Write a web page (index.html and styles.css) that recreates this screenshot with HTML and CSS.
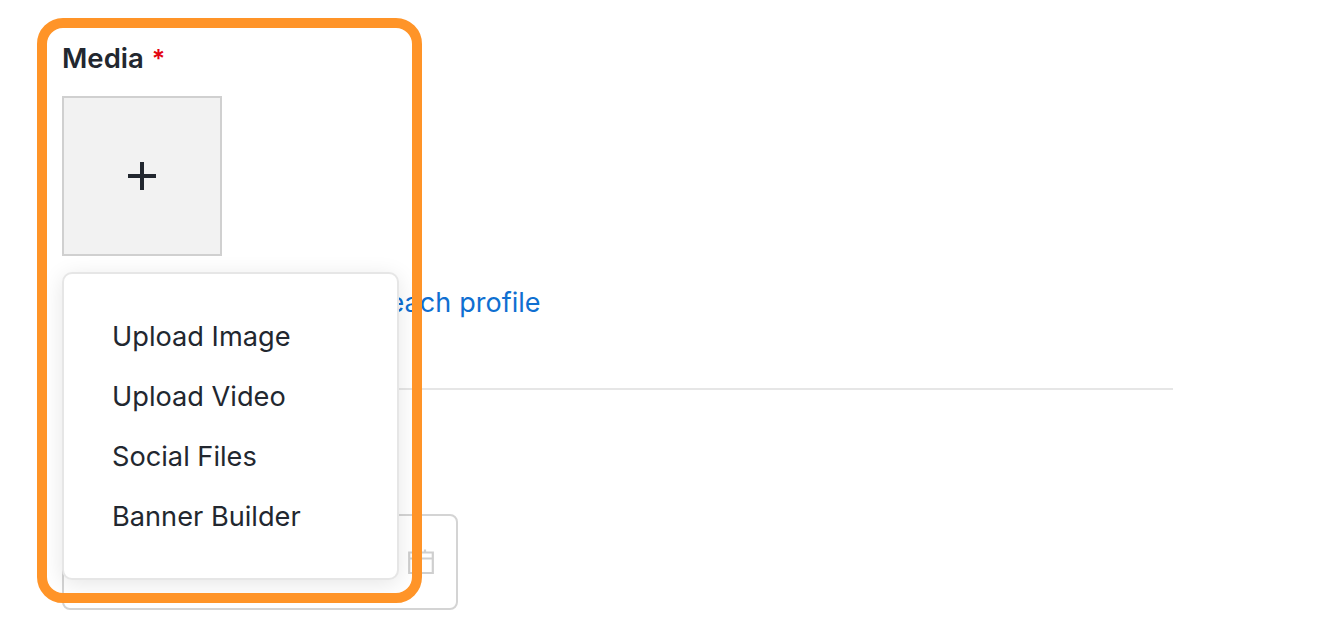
FILE: index.html
```html
<!DOCTYPE html>
<html lang="en">
<head>
  <meta charset="UTF-8">
  <title>Media</title>
  <link rel="stylesheet" href="styles.css">
</head>
<body>

  <div class="form">
    <div class="media-field">
      <label class="field-label">Media <span class="required">*</span></label>
      <button class="add-tile">
        <svg width="30" height="30" viewBox="0 0 30 30"><path d="M15 1V29M1 15H29" stroke="#22272f" stroke-width="4" fill="none"/></svg>
      </button>
      <a class="profile-link" href="#">Use a different media for each profile</a>

      <div class="media-menu">
        <div class="menu-item">Upload Image</div>
        <div class="menu-item">Upload Video</div>
        <div class="menu-item">Social Files</div>
        <div class="menu-item">Banner Builder</div>
      </div>
    </div>

    <hr class="divider">

    <div class="date-input">
      <svg class="calendar" width="26" height="26" viewBox="0 0 26 26"><path d="M1.2 3.5H24.8V24H1.2ZM1.2 9.5H24.8M8 0.5V3.5M17 0.5V3.5" stroke="#cfcfcf" stroke-width="2.2" fill="none"/></svg>
    </div>
  </div>

  <div class="highlight"></div>

</body>
</html>
```

FILE: styles.css
```css
body {
  margin: 0;
  font-family: Inter, "Liberation Sans", sans-serif;
  color: #22272f;
  background-color: #fff;
  overflow: hidden;
}

.form {
  width: 1111px;
  padding: 41px 0 0 62px;
}

.media-field {
  position: relative;
}

.field-label {
  display: block;
  height: 55px;
  font-size: 27.5px;
  line-height: 35px;
  font-weight: 600;
}

.required {
  margin-left: 1px;
  font-size: 25px;
  color: #e30613;
}

.add-tile {
  display: flex;
  align-items: center;
  justify-content: center;
  box-sizing: border-box;
  width: 160px;
  height: 160px;
  padding: 0;
  border: 2px solid #d0d0d0;
  background-color: #f2f2f2;
}

.profile-link {
  display: block;
  margin-top: 30px;
  font-size: 27px;
  line-height: 34px;
  word-spacing: 0.6px;
  color: #0f6fd1;
  text-decoration: none;
}

.media-menu {
  position: absolute;
  left: 0;
  top: 231px;
  box-sizing: border-box;
  width: 337px;
  height: 308px;
  padding: 33px 48px;
  background-color: #fff;
  border: 2px solid #e6e6e6;
  border-radius: 10px;
  box-shadow: 0 4px 22px rgba(0, 0, 0, 0.1);
}

.menu-item {
  font-size: 27.2px;
  line-height: 60px;
}

.divider {
  margin: 68px 0 0;
  border: none;
  border-top: 2px solid #e6e6e6;
}

.date-input {
  display: flex;
  align-items: center;
  justify-content: flex-end;
  box-sizing: border-box;
  width: 396px;
  height: 96px;
  margin-top: 124px;
  padding-right: 22px;
  border: 2px solid #d4d4d4;
  border-radius: 8px;
}

.highlight {
  position: absolute;
  left: 37px;
  top: 18px;
  box-sizing: border-box;
  width: 385px;
  height: 585px;
  border: 10px solid #ff9428;
  border-radius: 26px;
}
```
